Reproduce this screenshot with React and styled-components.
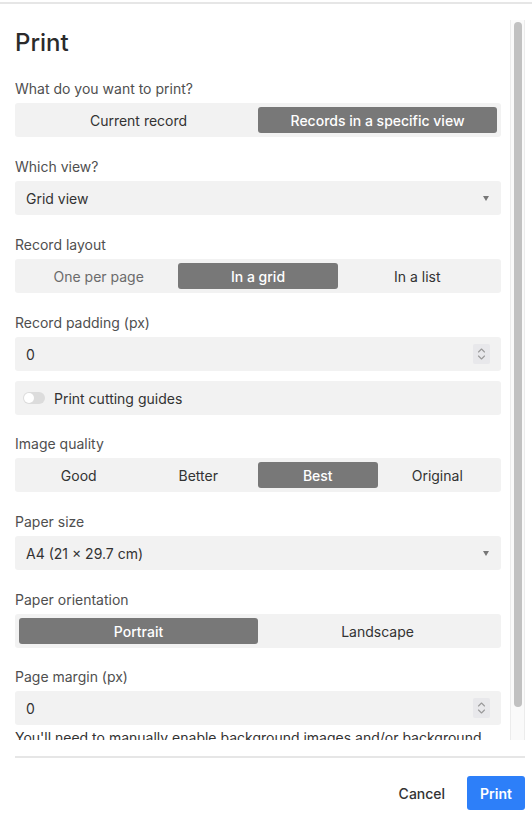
import React from 'react';
import styled, { createGlobalStyle } from 'styled-components';

const GlobalStyle = createGlobalStyle`
  html, body {
    margin: 0;
    padding: 0;
    background: #ffffff;
    font-family: Inter, "Liberation Sans", Arial, sans-serif;
    -webkit-font-smoothing: antialiased;
  }
  * { box-sizing: border-box; }
`;

const Dialog = styled.div`
  margin-top: 2px;
  border-top: 2px solid #e6e6e6;
  padding: 16px 7px 0 15px;
  height: 813px;
  display: flex;
  flex-direction: column;
`;

const ScrollArea = styled.div`
  display: flex;
  height: 720px;
`;

const Content = styled.div`
  flex: 1;
  min-width: 0;
  overflow: hidden;
  padding-right: 9px;
`;

const Track = styled.div`
  width: 15px;
  flex: none;
  padding: 2px 2px 0 3px;
  background: #fafafa;
  border-left: 1px solid #ececec;
  border-right: 1px solid #ececec;
`;

const Thumb = styled.div`
  height: 685px;
  border-radius: 5px;
  background: #c1c1c1;
`;

const Title = styled.h1`
  margin: 8px 0 0;
  font-size: 24px;
  line-height: 30px;
  font-weight: 500;
  color: #2b2b2b;
`;

const Field = styled.div`
  margin-top: ${(p) => p.gap ?? 21}px;
`;

const Label = styled.div`
  font-size: 14px;
  line-height: 17px;
  color: #4f4f4f;
  margin-bottom: 6px;
`;

const SegBar = styled.div`
  display: grid;
  grid-template-columns: repeat(${(p) => p.count}, 1fr);
  height: 34px;
  padding: 4px;
  background: #f2f2f2;
  border-radius: 3px;
`;

const Seg = styled.div`
  display: flex;
  align-items: center;
  justify-content: center;
  border-radius: 3px;
  font-size: 14px;
  font-weight: ${(p) => (p.active ? 500 : 400)};
  background: ${(p) => (p.active ? '#787878' : 'transparent')};
  color: ${(p) => (p.active ? '#ffffff' : p.muted ? '#6b6b6b' : '#333333')};
`;

const Box = styled.div`
  display: flex;
  align-items: center;
  justify-content: space-between;
  height: 34px;
  padding: 0 11px;
  background: #f2f2f2;
  border-radius: 3px;
  font-size: 14px;
  color: #333333;
`;

const Caret = styled.span`
  width: 0;
  height: 0;
  border-left: 3.5px solid transparent;
  border-right: 3.5px solid transparent;
  border-top: 5px solid #777777;
  margin-right: 1px;
`;

const Spinner = styled.span`
  display: flex;
  align-items: center;
  justify-content: center;
  width: 17px;
  height: 20px;
  background: #e8e8eb;
  border-radius: 2px;
`;

const ToggleRow = styled.div`
  display: flex;
  align-items: center;
  gap: 9px;
  height: 34px;
  margin-top: 10px;
  padding-left: 8px;
  background: #f2f2f2;
  border-radius: 3px;
  font-size: 14px;
  color: #333333;
`;

const Switch = styled.span`
  position: relative;
  width: 22px;
  height: 12px;
  border-radius: 6px;
  background: #dcdcdc;

  &::after {
    content: '';
    position: absolute;
    left: 1px;
    top: 1px;
    width: 10px;
    height: 10px;
    border-radius: 50%;
    background: #ffffff;
  }
`;

const Note = styled.p`
  margin: 4px 0 16px;
  font-size: 14px;
  line-height: 18px;
  color: #333333;
`;

const Footer = styled.div`
  margin-top: 16px;
  border-top: 2px solid #e6e6e6;
  display: flex;
  justify-content: flex-end;
  align-items: center;
  gap: 10px;
  padding-top: 18px;
`;

const Button = styled.button`
  height: 34px;
  padding: 0 ${(p) => (p.primary ? 13 : 12)}px;
  border: none;
  border-radius: 3px;
  font-family: inherit;
  font-size: 14px;
  font-weight: ${(p) => (p.primary ? 600 : 500)};
  background: ${(p) => (p.primary ? '#2d7ff9' : 'transparent')};
  color: ${(p) => (p.primary ? '#ffffff' : '#333333')};
`;

const Segmented = ({ options, active, muted = [] }) => (
  <SegBar count={options.length}>
    {options.map((o, i) => (
      <Seg key={o} active={i === active} muted={muted.includes(i)}>
        {o}
      </Seg>
    ))}
  </SegBar>
);

const Select = ({ value }) => (
  <Box>
    <span>{value}</span>
    <Caret />
  </Box>
);

const NumberInput = ({ value }) => (
  <Box>
    <span>{value}</span>
    <Spinner>
      <svg width="9" height="14" viewBox="0 0 9 14" fill="none" stroke="#9a9a9a" strokeWidth="1.1" strokeLinecap="round" strokeLinejoin="round">
        <path d="M1.5 5 L4.5 2 L7.5 5" />
        <path d="M1.5 9 L4.5 12 L7.5 9" />
      </svg>
    </Spinner>
  </Box>
);

export default function App() {
  return (
    <>
      <GlobalStyle />
      <Dialog>
        <ScrollArea>
          <Content>
            <Title>Print</Title>

            <Field gap={22}>
              <Label>What do you want to print?</Label>
              <Segmented options={['Current record', 'Records in a specific view']} active={1} />
            </Field>

            <Field>
              <Label>Which view?</Label>
              <Select value="Grid view" />
            </Field>

            <Field>
              <Label>Record layout</Label>
              <Segmented options={['One per page', 'In a grid', 'In a list']} active={1} muted={[0]} />
            </Field>

            <Field>
              <Label>Record padding (px)</Label>
              <NumberInput value="0" />
            </Field>

            <ToggleRow>
              <Switch />
              Print cutting guides
            </ToggleRow>

            <Field gap={20}>
              <Label>Image quality</Label>
              <Segmented options={['Good', 'Better', 'Best', 'Original']} active={2} />
            </Field>

            <Field>
              <Label>Paper size</Label>
              <Select value="A4 (21 × 29.7 cm)" />
            </Field>

            <Field>
              <Label>Paper orientation</Label>
              <Segmented options={['Portrait', 'Landscape']} active={0} />
            </Field>

            <Field gap={20}>
              <Label>Page margin (px)</Label>
              <NumberInput value="0" />
            </Field>

            <Note>
              You'll need to manually enable background images and/or background colors in your
              browser's print settings.
            </Note>
          </Content>
          <Track>
            <Thumb />
          </Track>
        </ScrollArea>

        <Footer>
          <Button>Cancel</Button>
          <Button primary>Print</Button>
        </Footer>
      </Dialog>
    </>
  );
}
